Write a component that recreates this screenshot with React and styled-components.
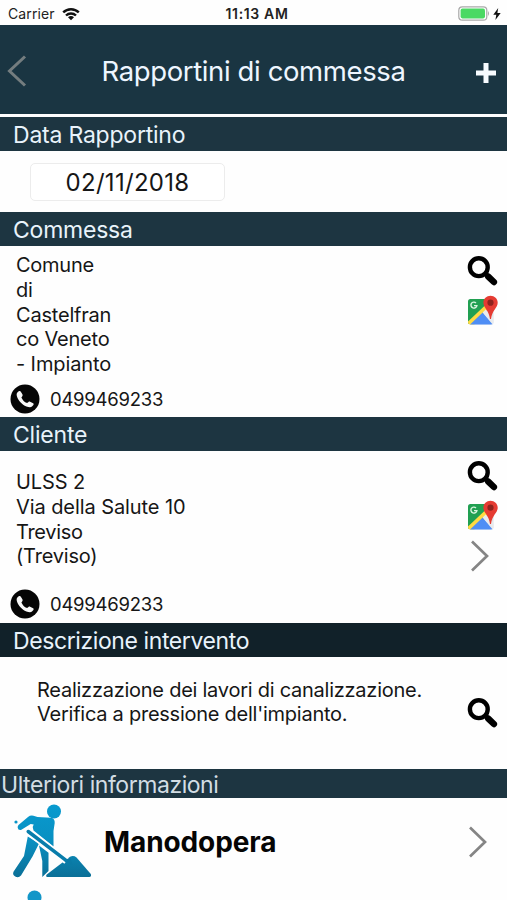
import React from "react";
import styled, { createGlobalStyle } from "styled-components";

const GlobalStyle = createGlobalStyle`
  * { box-sizing: border-box; }
  html, body { margin: 0; padding: 0; background: #fff; }
  body { font-family: Inter, "Liberation Sans", sans-serif; color: #161616; }
`;

const Screen = styled.main`
  display: flex;
  flex-direction: column;
  width: 507px;
  height: 900px;
  overflow: hidden;
  background: #fefefe;
`;

const Label = styled.span`
  display: block;
  white-space: nowrap;
  font-size: ${(p) => p.$size}px;
  letter-spacing: ${(p) => p.$track || 0}px;
  font-weight: ${(p) => p.$weight || 400};
`;

const StatusBar = styled.div`
  flex: none;
  display: grid;
  grid-template-columns: 1fr auto 1fr;
  align-items: center;
  height: 25px;
  padding: 2px 6px 0 8px;
  color: #222;
`;

const Clock = styled(Label)`
  padding-left: 5px;
`;

const Carrier = styled.div`
  display: flex;
  align-items: center;
  gap: 7px;
`;

const Power = styled.div`
  display: flex;
  align-items: center;
  justify-content: flex-end;
  gap: 3px;
`;

const NavBar = styled.header`
  flex: none;
  display: flex;
  align-items: center;
  justify-content: space-between;
  height: 89px;
  margin-bottom: 3px;
  padding: 3px 11px 0 7px;
  background: #1a3542;
  color: #eef6ff;
`;

const Title = styled(Label)`
  margin: 0;
  padding-left: 4px;
`;

const IconButton = styled.button`
  display: block;
  padding: 0;
  border: 0;
  background: none;
  line-height: 0;
  margin-top: ${(p) => p.$top || 0}px;
  margin-right: ${(p) => p.$right || 0}px;
`;

const SectionTitle = styled.h2`
  flex: none;
  display: flex;
  align-items: center;
  margin: 0;
  height: ${(p) => p.$height || 34}px;
  padding-top: 2px;
  padding-left: ${(p) => (p.$flush ? 1 : 13)}px;
  background: ${(p) => p.$bg || "#1d3541"};
  color: ${(p) => (p.$flush ? "#d3dde4" : "#e9f3fb")};
`;

const DateRow = styled.div`
  flex: none;
  height: 61px;
  padding: 12px 0 0 30px;
`;

const DateField = styled.div`
  display: flex;
  align-items: center;
  justify-content: center;
  width: 195px;
  height: 38px;
  border: 1px solid #ececec;
  border-radius: 5px;
  background: #fff;
`;

const Panel = styled.section`
  flex: none;
  display: flex;
  justify-content: space-between;
  height: ${(p) => p.$height}px;
`;

const Details = styled.div`
  display: flex;
  flex-direction: column;
  justify-content: space-between;
  padding: ${(p) => p.$top}px 0 ${(p) => p.$bottom || 3}px 10px;
`;

const Lines = styled.div`
  padding-left: ${(p) => p.$indent}px;
  line-height: 24.8px;
`;

const Phone = styled.div`
  display: flex;
  align-items: center;
  gap: 10px;
`;

const Actions = styled.div`
  display: flex;
  flex-direction: column;
  align-items: flex-start;
  width: 40px;
  padding-top: ${(p) => p.$top}px;
`;

const ChevronSlot = styled.div`
  padding: 8px 0 0 3px;
  line-height: 0;
`;

const MenuRow = styled.div`
  flex: none;
  display: flex;
  align-items: flex-start;
  height: 88px;
`;

const WorkerBox = styled.div`
  width: 104px;
  padding: 3px 0 0 9px;
  line-height: 0;
`;

const MenuLabel = styled.div`
  flex: 1;
  padding-top: 27px;
  color: #050505;
`;

const NextRow = styled(MenuRow)`
  padding: 4px 0 0 27px;
`;

const Search = () => (
  <svg width="32" height="32" viewBox="0 0 32 32" fill="none" stroke="#000">
    <circle cx="11.8" cy="12.2" r="8.9" strokeWidth="4.4" />
    <path d="M18 18.4 21 21.2" strokeWidth="4.5" />
    <path d="m21.3 21.6 5.6 5.4" strokeWidth="6.4" strokeLinecap="round" />
  </svg>
);

const MapIcon = () => (
  <svg width="32" height="32" viewBox="0 0 32 32">
    <defs>
      <clipPath id="tile"><rect x="1" y="4" width="25.5" height="25.5" rx="2.5" /></clipPath>
    </defs>
    <g clipPath="url(#tile)">
      <path fill="#dde1e6" d="M0 3h28v28H0z" />
      <path fill="#21a052" d="M0 3h22v7L1 30H0z" />
      <path fill="#ffda43" d="M1 26.5 18.5 10l4 4L6 31H1z" />
      <path fill="#4f8ef5" d="m2.5 30 13.2-12.6L27 30z" />
      <path fill="#e9ebee" d="m15.7 17.4 3-3L27 23v7h-1z" />
    </g>
    <path d="M9 7.9a3 3 0 1 0 .9 2.7H7" fill="none" stroke="#d9f4df" strokeWidth="1.4" />
    <path fill="#e53b32" d="M23.5.8c4 0 7.2 3 7.2 6.9 0 5.2-5.6 7.4-6.7 16.3h-1c-1-8.9-6.6-11.1-6.6-16.3 0-3.9 3.2-6.9 7.1-6.9z" />
    <circle cx="23.5" cy="7.7" r="3.1" fill="#8f221d" />
  </svg>
);

const Chevron = ({ left }) => (
  <svg width="20" height="32" viewBox="0 0 20 32" fill="none" stroke={left ? "#747d7f" : "#858585"} strokeWidth={left ? 3 : 2.7}>
    <path d={left ? "M18 1.5 2.500 16 18 30.500" : "m2 1.5 15 14.500L2 30.500"} />
  </svg>
);

const PhoneIcon = () => (
  <svg width="30" height="30" viewBox="0 0 30 30">
    <circle cx="15" cy="15" r="14.5" fill="#050505" />
    <path fill="#f7f7f7" d="m7.6 8.3 1.4-1.2c.6-.4 1.3-.2 1.7.4l1.8 3.1c.3.6.2 1.1-.2 1.6l-.9 1.2c1.2 2.7 2.9 4.5 5.7 5.6l1.4-1.1c.5-.4 1-.5 1.6-.2l3 1.6c.6.4.7 1 .3 1.6l-1.2 1.4c-1.1 1.2-3.2 1.1-5.8.1-4.5-1.9-8.1-5.700-9.500-10.200-.5-1.700-.3-3 .7-3.900z" />
  </svg>
);

const Worker = () => (
  <svg width="84" height="78" viewBox="0 0 84 78">
    <defs>
      <linearGradient id="body" gradientUnits="userSpaceOnUse" x1="0" y1="0" x2="0" y2="78">
        <stop offset="0" stopColor="#089bd0" />
        <stop offset=".5" stopColor="#0990c2" />
        <stop offset="1" stopColor="#0b6e95" />
      </linearGradient>
    </defs>
    <g fill="url(#body)">
      <circle cx="45" cy="10.5" r="7" />
      <circle cx="7" cy="21" r="1.6" />
      <path d="M9.500 24 19 16q2.500-2 5.500-1.200l4 1.200 13.500.8Q46 17.500 45.700 22L44.500 30v15.500L24.500 29.500l-.8-3.500 1-2.500-3-.5L12 29q-3 .5-3.300-2.300-.2-1.500.800-2.700z" />
      <path d="M18.800 35.500 30 42.500 23.500 55.500 12 74.500q-2.500 2.700-5.800 1-3-1.900-1.700-4.800L15 55z" />
      <path d="m30 44.500 9.500 7.200V70L33.300 76V60z" />
      <path d="m57.700 58.300 3.300-2.500q3.500-1.800 6.500.7L81.800 73q1 2.600-1.500 3H38.500q-2.300-.5-.8-2.500z" />
    </g>
    <path d="m18.500 30 39 30" fill="none" stroke="#fff" strokeWidth="7" />
    <path d="m58 58 3.500-1 2 7-8-3.500z" fill="#0a7aa5" />
    <path d="m19.200 30.500 37.500 28.700" fill="none" stroke="#087dab" strokeWidth="3.500" strokeLinecap="round" />
  </svg>
);

const PhoneLine = () => (
  <Phone>
    <PhoneIcon />
    <Label $size={18.5} $track={-0.25}>0499469233</Label>
  </Phone>
);

const TextLines = ({ lines, indent }) => (
  <Lines $indent={indent}>
    {lines.map(([text, track]) => <Label key={text} $size={20} $track={track}>{text}</Label>)}
  </Lines>
);

export default function App() {
  return (
    <Screen>
      <GlobalStyle />
      <StatusBar>
        <Carrier>
          <Label $size={14} $track={0.1}>Carrier</Label>
          <svg width="18" height="14" viewBox="0 0 18 14" fill="none" stroke="#111" strokeWidth="2.4">
            <path d="M1.2 5.4a11.2 11.2 0 0 1 15.600 0M4 8.500a7.200 7.200 0 0 1 10 0" />
            <path fill="#111" stroke="none" d="M6 10.200q3-2.500 6 0l-3 3z" />
          </svg>
        </Carrier>
        <Clock $size={14} $weight={600} $track={0.65}>11:13 AM</Clock>
        <Power>
          <svg width="32" height="15" viewBox="0 0 32 15">
            <rect x=".8" y=".8" width="28" height="13.4" rx="3.5" fill="#fff" stroke="#a9a9a9" strokeWidth="1.2" />
            <rect x="2.6" y="2.6" width="24.4" height="9.8" rx="1.8" fill="#4bd964" />
            <path d="M30 5q2 2.5 0 5z" fill="#a9a9a9" />
          </svg>
          <svg width="8" height="12" viewBox="0 0 8 12"><path fill="#111" d="M5.2 0 .3 6.8h3L2.4 12l5.300-7.100H4.400z" /></svg>
        </Power>
      </StatusBar>
      <NavBar>
        <IconButton aria-label="Indietro"><Chevron left /></IconButton>
        <Title as="h1" $size={27.5} $track={-0.38}>Rapportini di commessa</Title>
        <IconButton aria-label="Aggiungi" $top={3}>
          <svg width="20" height="20" viewBox="0 0 20 20"><path d="M10 0v20M0 10h20" stroke="#f7fbff" strokeWidth="5" /></svg>
        </IconButton>
      </NavBar>
      <SectionTitle><Label $size={23} $track={-0.22}>Data Rapportino</Label></SectionTitle>
      <DateRow><DateField><Label $size={24} $track={0.3}>02/11/2018</Label></DateField></DateRow>
      <SectionTitle><Label $size={23} $track={-0.22}>Commessa</Label></SectionTitle>
      <Panel $height={171}>
        <Details $top={7}>
          <TextLines indent={6} lines={[["Comune", -0.25], ["di", -0.2], ["Castelfran", -0.2], ["co Veneto", -0.2], ["- Impianto", -0.1]]} />
          <PhoneLine />
        </Details>
        <Actions $top={9}>
          <IconButton aria-label="Cerca"><Search /></IconButton>
          <IconButton aria-label="Mappa" $top={8}><MapIcon /></IconButton>
        </Actions>
      </Panel>
      <SectionTitle><Label $size={23} $track={-0.2}>Cliente</Label></SectionTitle>
      <Panel $height={172}>
        <Details $top={19} $bottom={4}>
          <TextLines indent={6} lines={[["ULSS 2", -0.1], ["Via della Salute 10", -0.08], ["Treviso", -0.3], ["(Treviso)", -0.2]]} />
          <PhoneLine />
        </Details>
        <Actions $top={9}>
          <IconButton aria-label="Cerca"><Search /></IconButton>
          <IconButton aria-label="Mappa" $top={8}><MapIcon /></IconButton>
          <ChevronSlot><Chevron /></ChevronSlot>
        </Actions>
      </Panel>
      <SectionTitle $bg="#112129"><Label $size={23} $track={-0.4}>Descrizione intervento</Label></SectionTitle>
      <Panel $height={112}>
        <Details $top={20.5}>
          <TextLines indent={27} lines={[["Realizzazione dei lavori di canalizzazione.", -0.25], ["Verifica a pressione dell'impianto.", -0.25]]} />
        </Details>
        <Actions $top={40}><IconButton aria-label="Cerca"><Search /></IconButton></Actions>
      </Panel>
      <SectionTitle $flush $height={29}><Label $size={23} $track={-0.45}>Ulteriori informazioni</Label></SectionTitle>
      <MenuRow>
        <WorkerBox><Worker /></WorkerBox>
        <MenuLabel><Label $size={28} $weight={700} $track={-0.1}>Manodopera</Label></MenuLabel>
        <IconButton aria-label="Apri Manodopera" $top={28} $right={19}><Chevron /></IconButton>
      </MenuRow>
      <NextRow>
        <svg width="15" height="15" viewBox="0 0 15 15"><circle cx="7.5" cy="7.5" r="7" fill="#1296c8" /></svg>
      </NextRow>
    </Screen>
  );
}
